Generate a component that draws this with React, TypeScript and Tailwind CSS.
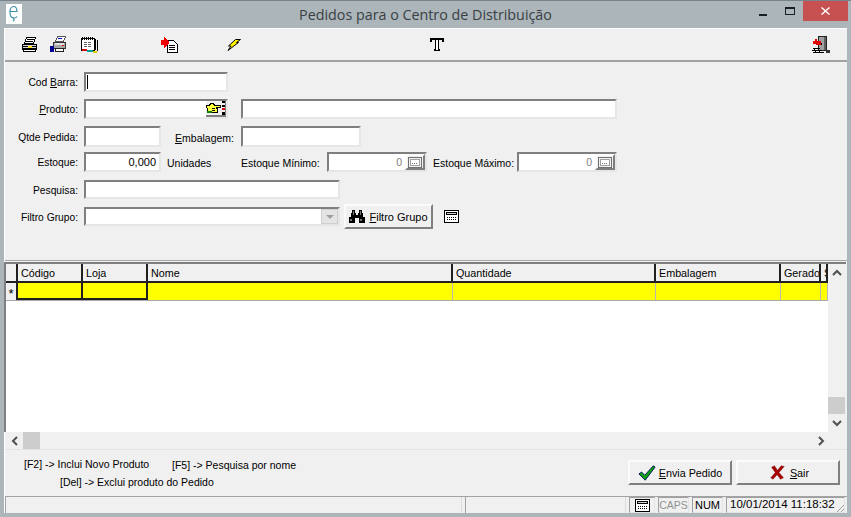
import React from "react";

const sunken = "border-2 border-t-[#7f7f7f] border-l-[#7f7f7f] border-r-[#e6e6e6] border-b-[#e6e6e6] bg-white";
const raised = "border-2 border-t-[#fbfbfb] border-l-[#fbfbfb] border-r-[#7f7f7f] border-b-[#7f7f7f] bg-[#f0f0f0]";

const LogoIcon = () => (
    <svg width="16" height="20" viewBox="0 0 16 20">
        <rect width="16" height="20" fill="#fff" />
        <path d="M4.500 7.500h6.500c0-3-1.500-5-3.500-5s-3.500 2.500-3.500 6 1.500 5.500 4 5.500c1.500 0 2.500-.5 3-1.500M7 14c1.500 1 1.500 2.500 0 3" fill="none" stroke="#3f8ea8" strokeWidth="1.200" />
    </svg>
);

const PrinterIcon = () => (
    <svg width="17" height="17" viewBox="0 0 17 17" shapeRendering="crispEdges">
        <path d="M5.500 1.500h9l-2 6h-9z" fill="#fff" stroke="#000" />
        <path d="M6 3h7M5 5h7" stroke="#000" />
        <path d="M1.500 8.500h14v5h-14z" fill="#d8d8d8" stroke="#000" />
        <path d="M2.500 13.500h12v2h-12z" fill="#fff" stroke="#000" />
        <path d="M1 10h15M1 12h15" stroke="#000" />
        <rect x="7" y="10" width="4" height="2" fill="#ffe820" />
    </svg>
);

const PrinterColorIcon = () => (
    <svg width="17" height="17" viewBox="0 0 17 17" shapeRendering="crispEdges">
        <path d="M7.500.5h8l-2 5h-8z" fill="#fff" stroke="#555" />
        <rect x="8" y="2" width="4" height="1" fill="#0000c0" />
        <path d="M3.500 6.500h12v6h-12z" fill="#a8a8a8" stroke="#333" />
        <rect x="5" y="7" width="9" height="2" fill="#e0e0e0" />
        <rect x="12" y="9" width="2" height="1" fill="#e00000" />
        <path d="M5.500 12.500h8v3h-8z" fill="#fff" stroke="#222" />
        <rect x="0" y="10" width="4" height="6" fill="#000090" />
    </svg>
);

const CalendarIcon = () => (
    <svg width="17" height="18" viewBox="0 0 17 18" shapeRendering="crispEdges">
        <path d="M.5 2.500h13v12h-13z" fill="#fff" stroke="#000" />
        <path d="M14 3h1v11h-1zM16 4h1v11h-1z" fill="#000" />
        <path d="M1 1h1v3H1zM3 1h1v3H3zM5 1h1v3H5zM7 1h1v3H7zM9 1h1v3H9zM11 1h1v3h-1z" fill="#000" />
        <path d="M3 6h3v1H3zM7 6h3v1H7zM3 8h3v1H3zM7 8h3v1H7zM3 10h3v1H3zM7 10h3v1H7z" fill="#666" />
        <rect x="1" y="13" width="5" height="2" fill="#d00000" />
        <rect x="6" y="14" width="6" height="2" fill="#00a0a0" />
        <rect x="12" y="15" width="4" height="2" fill="#e0d000" />
    </svg>
);

const DocArrowIcon = () => (
    <svg width="17" height="16" viewBox="0 0 17 16" shapeRendering="crispEdges">
        <path d="M6.500 3.500h6l3.500 3.500v8.500H6.500z" fill="#fff" stroke="#000" />
        <path d="M8 8h6v1H8zM8 10h6v1H8zM8 12h6v1H8z" fill="#000" />
        <path d="M0 3h3V0h1v1h1v1h1v1h1v1h1v2H8v1H7v1H6v1H5v1H4v1H3V8H0z" fill="#f00000" />
    </svg>
);

const BoltIcon = () => (
    <svg width="14" height="12" viewBox="0 0 14 12">
        <path d="M8.500.5H13.500L9.500 3.500H11.500L1 11.500 4 7H1.500z" fill="#fff000" stroke="#000" strokeWidth="1" />
    </svg>
);

const TeeIcon = () => (
    <svg width="14" height="13" viewBox="0 0 14 13" shapeRendering="crispEdges">
        <path d="M0 0h14v4h-2V2H9v9h1v2H4v-2h1V2H2v2H0z" fill="#000" />
        <rect x="6" y="2" width="2" height="10" fill="#fff" />
    </svg>
);

const DoorIcon = () => (
    <svg width="18" height="18" viewBox="0 0 18 18" shapeRendering="crispEdges">
        <path d="M6.500.5h8v14h-8z" fill="#a0a0a0" stroke="#222" />
        <path d="M12 1h2v13h-2z" fill="#606060" />
        <rect x="9" y="7" width="1" height="2" fill="#000" />
        <path d="M3 3h2v2h4v4H4l-1-1H1V5h2z" fill="#e00000" />
        <path d="M1 12h7v1H1zM0 14h10v1H0zM1 16h11v1H1z" fill="#000" />
        <path d="M2 13h1v1H2zM6 13h1v1H6zM3 15h1v1H3zM7 15h1v1H7z" fill="#000" />
        <rect x="14" y="14" width="4" height="3" fill="#333" />
    </svg>
);

const PointerIcon = () => (
    <svg width="15" height="11" viewBox="0 0 15 11" shapeRendering="crispEdges">
        <path d="M.5 2.500h3l1-2h3l1 2h5.500v1.500h-4v1h1v4h-8l-1.500-1z" fill="#ffff40" stroke="#000" />
        <path d="M6 5h3M6 7h3" stroke="#000" />
        <rect x="1" y="8" width="5" height="2" fill="#108010" />
    </svg>
);

const DotsIcon = () => (
    <svg width="3" height="16" viewBox="0 0 3 16" shapeRendering="crispEdges">
        <rect x="0" y="0" width="3" height="3" fill="#000" />
        <rect x="0" y="5" width="3" height="2" fill="#000" />
        <rect x="0" y="8" width="3" height="2" fill="#e00000" />
        <rect x="0" y="12" width="3" height="3" fill="#000" />
    </svg>
);

const BinocularsIcon = () => (
    <svg width="16" height="13" viewBox="0 0 16 13" shapeRendering="crispEdges">
        <path d="M3 0h3v3h1v2h2V3h1V0h3v3h1v4h2v6H10V8H6v5H0V7h2V3h1z" fill="#000" />
        <rect x="1" y="9" width="2" height="2" fill="#777" />
        <rect x="11" y="9" width="2" height="2" fill="#777" />
        <rect x="4" y="1" width="1" height="4" fill="#777" />
        <rect x="11" y="1" width="1" height="4" fill="#777" />
    </svg>
);

const CalcIcon = () => (
    <svg width="15" height="13" viewBox="0 0 15 13" shapeRendering="crispEdges">
        <path d="M.5.5h14v12H.5z" fill="#fff" stroke="#000" />
        <path d="M2.500 2.500h10v2h-10z" fill="#d0d0d0" stroke="#000" />
        <path d="M3 7h1v1H3zM5 7h1v1H5zM7 7h1v1H7zM9 7h1v1H9zM11 7h1v1h-1zM3 9h1v1H3zM5 9h1v1H5zM7 9h1v1H7zM9 9h1v1H9zM11 9h1v1h-1z" fill="#000" />
    </svg>
);

const SpinCalcIcon = () => (
    <svg width="14" height="11" viewBox="0 0 14 11" shapeRendering="crispEdges">
        <path d="M.5.5h13v10H.5z" fill="#f0f0f0" stroke="#707070" />
        <path d="M2.500 2.500h9v6h-9z" fill="#fff" stroke="#a0a0a0" />
        <path d="M4 6h1v1H4zM6 6h1v1H6zM8 6h1v1H8z" fill="#707070" />
    </svg>
);

const CheckIcon = () => (
    <svg width="18" height="18" viewBox="0 0 20 18">
        <path d="M1 10 4 8 7.500 11.500 17 1 19 2.500 8 17z" fill="#10a010" stroke="#001060" strokeWidth="1" />
    </svg>
);

const CrossIcon = () => (
    <svg width="15" height="15" viewBox="0 0 20 18">
        <path d="M2 2 6 0 10 6 15 0 19 1 12 9 18 16 14 18 9.500 12 4 18 1 16 7 9z" fill="#a80000" stroke="#701010" strokeWidth=".5" />
    </svg>
);

const GripIcon = () => (
    <svg width="12" height="12" viewBox="0 0 12 12">
        <path d="M12 2 2 12M12 6 6 12M12 10 10 12" stroke="#a0a0a0" strokeWidth="1" />
    </svg>
);

const Chevron = ({ dir }: { dir: "up" | "down" | "left" | "right" }) => {
    const paths = {
        up: "M1 6 5 2 9 6",
        down: "M1 2 5 6 9 2",
        left: "M6 1 2 5 6 9",
        right: "M2 1 6 5 2 9",
    };
    const horizontal = dir === "left" || dir === "right";
    return (
        <svg width={horizontal ? 8 : 10} height={horizontal ? 10 : 8} viewBox={horizontal ? "0 0 8 10" : "0 0 10 8"}>
            <path d={paths[dir]} fill="none" stroke="#505050" strokeWidth="2" />
        </svg>
    );
};

const Label = ({ children, className = "" }: { children: React.ReactNode; className?: string }) => (
    <span className={`whitespace-nowrap pt-[3px] ${className}`}>{children}</span>
);

const RowLabel = ({ children }: { children: React.ReactNode }) => (
    <span className="w-[73px] mr-[6px] pt-[3px] text-right whitespace-nowrap text-[10.25px]">{children}</span>
);

const Input = ({ className = "", value }: { className?: string; value?: string }) => (
    <div className={`${sunken} h-full flex items-center justify-end pr-[3px] ${className}`}>{value}</div>
);

const NumberField = ({ className = "" }: { className?: string }) => (
    <div className={`${sunken} h-full flex items-center justify-end ${className}`}>
        <span className="text-[#808080] pr-[3px]">0</span>
        <div className={`${raised} w-[20px] h-full flex items-center justify-center`}>
            <SpinCalcIcon />
        </div>
    </div>
);

const columns = [
    { title: "Código", width: "w-[65px]", selected: true },
    { title: "Loja", width: "w-[65px]", selected: true },
    { title: "Nome", width: "w-[305px]", selected: false },
    { title: "Quantidade", width: "w-[203px]", selected: false },
    { title: "Embalagem", width: "w-[125px]", selected: false },
    { title: "Gerado", width: "w-[40px]", selected: false },
    { title: "S", width: "w-[7px]", selected: false },
];

const StatusPanel = ({ children, className = "" }: { children?: React.ReactNode; className?: string }) => (
    <div className={`h-[16px] border border-t-[#a0a0a0] border-l-[#a0a0a0] border-r-[#e4e4e4] border-b-[#e4e4e4] flex items-center overflow-hidden ${className}`}>
        {children}
    </div>
);

export default function App() {
    return (
        <div
            className="w-[851px] h-[517px] flex flex-col overflow-hidden bg-[#abb5ba] text-[10.5px] leading-none text-black"
            style={{ fontFamily: '"Liberation Sans", Arial, sans-serif' }}
        >
            {/* title bar */}
            <div className="h-[28px] shrink-0 border-t border-t-[#76838b] grid grid-cols-[1fr_auto_1fr] items-start">
                <div className="pl-[6px] pt-[3px]">
                    <LogoIcon />
                </div>
                <div className="pt-[5px] text-[14.3px] leading-[18px] text-[#3a3f44]" style={{ fontFamily: '"Open Sans", sans-serif' }}>
                    Pedidos para o Centro de Distribuição
                </div>
                <div className="flex justify-end pr-[3px]">
                    <div className="w-[8px] h-[2px] mt-[13px] mr-[18px] bg-[#1a1f24]" />
                    <div className="w-[10px] h-[8px] mt-[6px] mr-[8px] border border-t-2 border-[#1a1f24]" />
                    <div className="w-[45px] h-[20px] bg-[#c75050] flex items-center justify-center text-white">
                        <svg width="9" height="8" viewBox="0 0 9 8">
                            <path d="M1 0 4.500 3 8 0 9 1 5.500 4 9 7 8 8 4.500 5 1 8 0 7 3.500 4 0 1z" fill="#fff" />
                        </svg>
                    </div>
                </div>
            </div>

            {/* client area */}
            <div className="mx-[4px] h-[485px] shrink-0 bg-[#f0f0f0] flex flex-col border-t border-l border-t-white border-l-white">
                {/* toolbar */}
                <div className="h-[33px] shrink-0 border-b-2 border-b-[#a3a3a3] flex items-center">
                    <div className="ml-[16px]"><PrinterIcon /></div>
                    <div className="ml-[12px]"><PrinterColorIcon /></div>
                    <div className="ml-[14px]"><CalendarIcon /></div>
                    <div className="ml-[63px]"><DocArrowIcon /></div>
                    <div className="ml-[49px]"><BoltIcon /></div>
                    <div className="ml-[189px]"><TeeIcon /></div>
                    <div className="ml-[368px]"><DoorIcon /></div>
                </div>

                {/* form */}
                <div className="h-[198px] shrink-0 flex flex-col">
                    <div className="mt-[10px] h-[20px] flex items-center">
                        <RowLabel>Cod <u>B</u>arra:</RowLabel>
                        <div className={`${sunken} w-[144px] h-full flex items-center pl-[1px]`}>
                            <div className="w-px h-[14px] bg-black" />
                        </div>
                    </div>
                    <div className="mt-[7px] h-[20px] flex items-center">
                        <RowLabel><u>P</u>roduto:</RowLabel>
                        <div className={`${sunken} w-[144px] h-full flex justify-end`}>
                            <div className={`${raised} w-[20px] h-full flex items-center justify-end gap-px border-t-0 border-l-0 border-r-[1px] overflow-hidden`}>
                                <PointerIcon />
                                <DotsIcon />
                            </div>
                        </div>
                        <Input className="ml-[13px] w-[376px]" />
                    </div>
                    <div className="mt-[7px] h-[21px] flex items-center">
                        <RowLabel>Qtde Pedida:</RowLabel>
                        <Input className="w-[77px]" />
                        <Label className="w-[73px] text-right"><u>E</u>mbalagem:</Label>
                        <Input className="ml-[7px] w-[120px]" />
                    </div>
                    <div className="mt-[5px] h-[20px] flex items-center">
                        <RowLabel>Estoque:</RowLabel>
                        <Input className="w-[77px] text-[11px]" value="0,000" />
                        <Label className="ml-[6px] w-[74px]">Unidades</Label>
                        <Label className="w-[80px]">Estoque Mínimo:</Label>
                        <NumberField className="ml-[6px] w-[100px]" />
                        <Label className="ml-[6px] w-[84px]">Estoque Máximo:</Label>
                        <NumberField className="w-[100px]" />
                    </div>
                    <div className="mt-[8px] h-[19px] flex items-center">
                        <RowLabel>Pesquisa:</RowLabel>
                        <Input className="w-[256px]" />
                    </div>
                    <div className="mt-[8px] h-[19px] flex items-center">
                        <RowLabel>Filtro Grupo:</RowLabel>
                        <div className={`${sunken} w-[256px] h-full flex justify-end`}>
                            <div className="w-[17px] h-full bg-[#e4e4e4] border border-[#cfcfcf] flex items-center justify-center">
                                <div className="w-0 h-0 border-x-[4px] border-x-transparent border-t-[4px] border-t-[#a0a0a0]" />
                            </div>
                        </div>
                        <button type="button" className={`${raised} ml-[4px] w-[89px] h-[25px] -my-[3px] flex items-center justify-center gap-[4px] text-[11px]`}>
                            <BinocularsIcon />
                            <span className="pt-[2px]"><u>F</u>iltro Grupo</span>
                        </button>
                        <div className="ml-[11px] flex"><CalcIcon /></div>
                    </div>
                </div>

                {/* grid */}
                <div className="h-[189px] shrink-0 border-t border-t-[#a8a8a8] flex flex-col">
                    <div className="h-[170px] shrink-0 flex border-t-2 border-l-2 border-t-[#7f7f7f] border-l-[#7f7f7f] mt-[1px] mr-[1px] -ml-[1px]">
                        <div className="w-[822px] bg-white flex flex-col overflow-hidden">
                            <div className="flex h-[19px] shrink-0 bg-[#f0f0f0] border-b-2 border-b-[#202020] text-[10.75px]">
                                <div className="w-[12px] h-full shrink-0 border-r-2 border-r-[#202020]" />
                                {columns.map((col) => (
                                    <div key={col.title} className={`${col.width} shrink-0 h-full border-r-2 border-r-[#202020] pl-[3px] pt-[2px] flex items-center overflow-hidden whitespace-nowrap`}>
                                        {col.title}
                                    </div>
                                ))}
                            </div>
                            <div className="flex h-[18px] shrink-0 border-b border-b-[#a8a8a8]">
                                <div className="w-[12px] h-full shrink-0 bg-[#f0f0f0] border-r-2 border-r-[#202020] flex items-center justify-center text-[13px] pt-[3px]">*</div>
                                {columns.map((col) => (
                                    <div key={col.title} className={`${col.width} shrink-0 h-full bg-[#ffff00] ${col.selected ? "border-r-2 border-r-[#202020] border-b-2 border-b-[#202020]" : "border-r border-r-[#b8b8b8]"}`} />
                                ))}
                            </div>
                        </div>
                        <div className="w-[17px] shrink-0 bg-[#f0f0f0] flex flex-col items-center">
                            <div className="h-[17px] flex items-center justify-center"><Chevron dir="up" /></div>
                            <div className="flex-1 w-full flex flex-col justify-end">
                                <div className="h-[17px] w-full bg-[#cdcdcd]" />
                            </div>
                            <div className="h-[18px] flex items-center justify-center"><Chevron dir="down" /></div>
                        </div>
                    </div>
                    <div className="h-[17px] shrink-0 flex items-center ml-[1px] mr-[1px]">
                        <div className="w-[17px] flex items-center justify-center"><Chevron dir="left" /></div>
                        <div className="w-[17px] h-full bg-[#cdcdcd]" />
                        <div className="flex-1" />
                        <div className="w-[17px] flex items-center justify-center mr-[17px]"><Chevron dir="right" /></div>
                    </div>
                </div>

                {/* hints and buttons */}
                <div className="h-[47px] shrink-0 border-t border-t-[#e3e3e3] flex">
                    <div className="w-[623px] flex flex-col">
                        <div className="mt-[8px] h-[12px] flex items-center">
                            <span className="ml-[19px] w-[148px] whitespace-nowrap">[F2] -&gt; Inclui Novo Produto</span>
                            <span className="mt-[2px] whitespace-nowrap">[F5] -&gt; Pesquisa por nome</span>
                        </div>
                        <div className="mt-[6px] ml-[55px] h-[12px] flex items-center whitespace-nowrap">[Del] -&gt; Exclui produto do Pedido</div>
                    </div>
                    <button type="button" className={`${raised} mt-[10px] w-[104px] h-[25px] flex items-center justify-center gap-[3px] text-[10.75px]`}>
                        <CheckIcon />
                        <span className="pt-[2px]"><u>E</u>nvia Pedido</span>
                    </button>
                    <button type="button" className={`${raised} ml-[4px] mt-[10px] w-[104px] h-[25px] flex items-center justify-center gap-[5px] pl-[3px] text-[10.75px]`}>
                        <CrossIcon />
                        <span className="pt-[2px]"><u>S</u>air</span>
                    </button>
                </div>

                {/* status bar */}
                <div className="h-[17px] shrink-0 border-t border-t-[#a3a3a3] flex gap-[3px]">
                    <div className="w-[457px] h-[16px] border-l border-l-[#a0a0a0] border-r border-r-[#dcdcdc]" />
                    <div className="w-[161px] h-[16px] border-l border-l-[#a0a0a0] border-r border-r-[#dcdcdc]" />
                    <StatusPanel className="w-[26px] justify-center"><CalcIcon /></StatusPanel>
                    <StatusPanel className="w-[31px] justify-center text-[#909090]">CAPS</StatusPanel>
                    <StatusPanel className="w-[31px] justify-center text-[11px]">NUM</StatusPanel>
                    <StatusPanel className="w-[119px] pl-[3px] text-[11.5px] whitespace-nowrap justify-between">
                        10/01/2014 11:18:32
                        <div className="self-end flex"><GripIcon /></div>
                    </StatusPanel>
                </div>
            </div>
        </div>
    );
}
